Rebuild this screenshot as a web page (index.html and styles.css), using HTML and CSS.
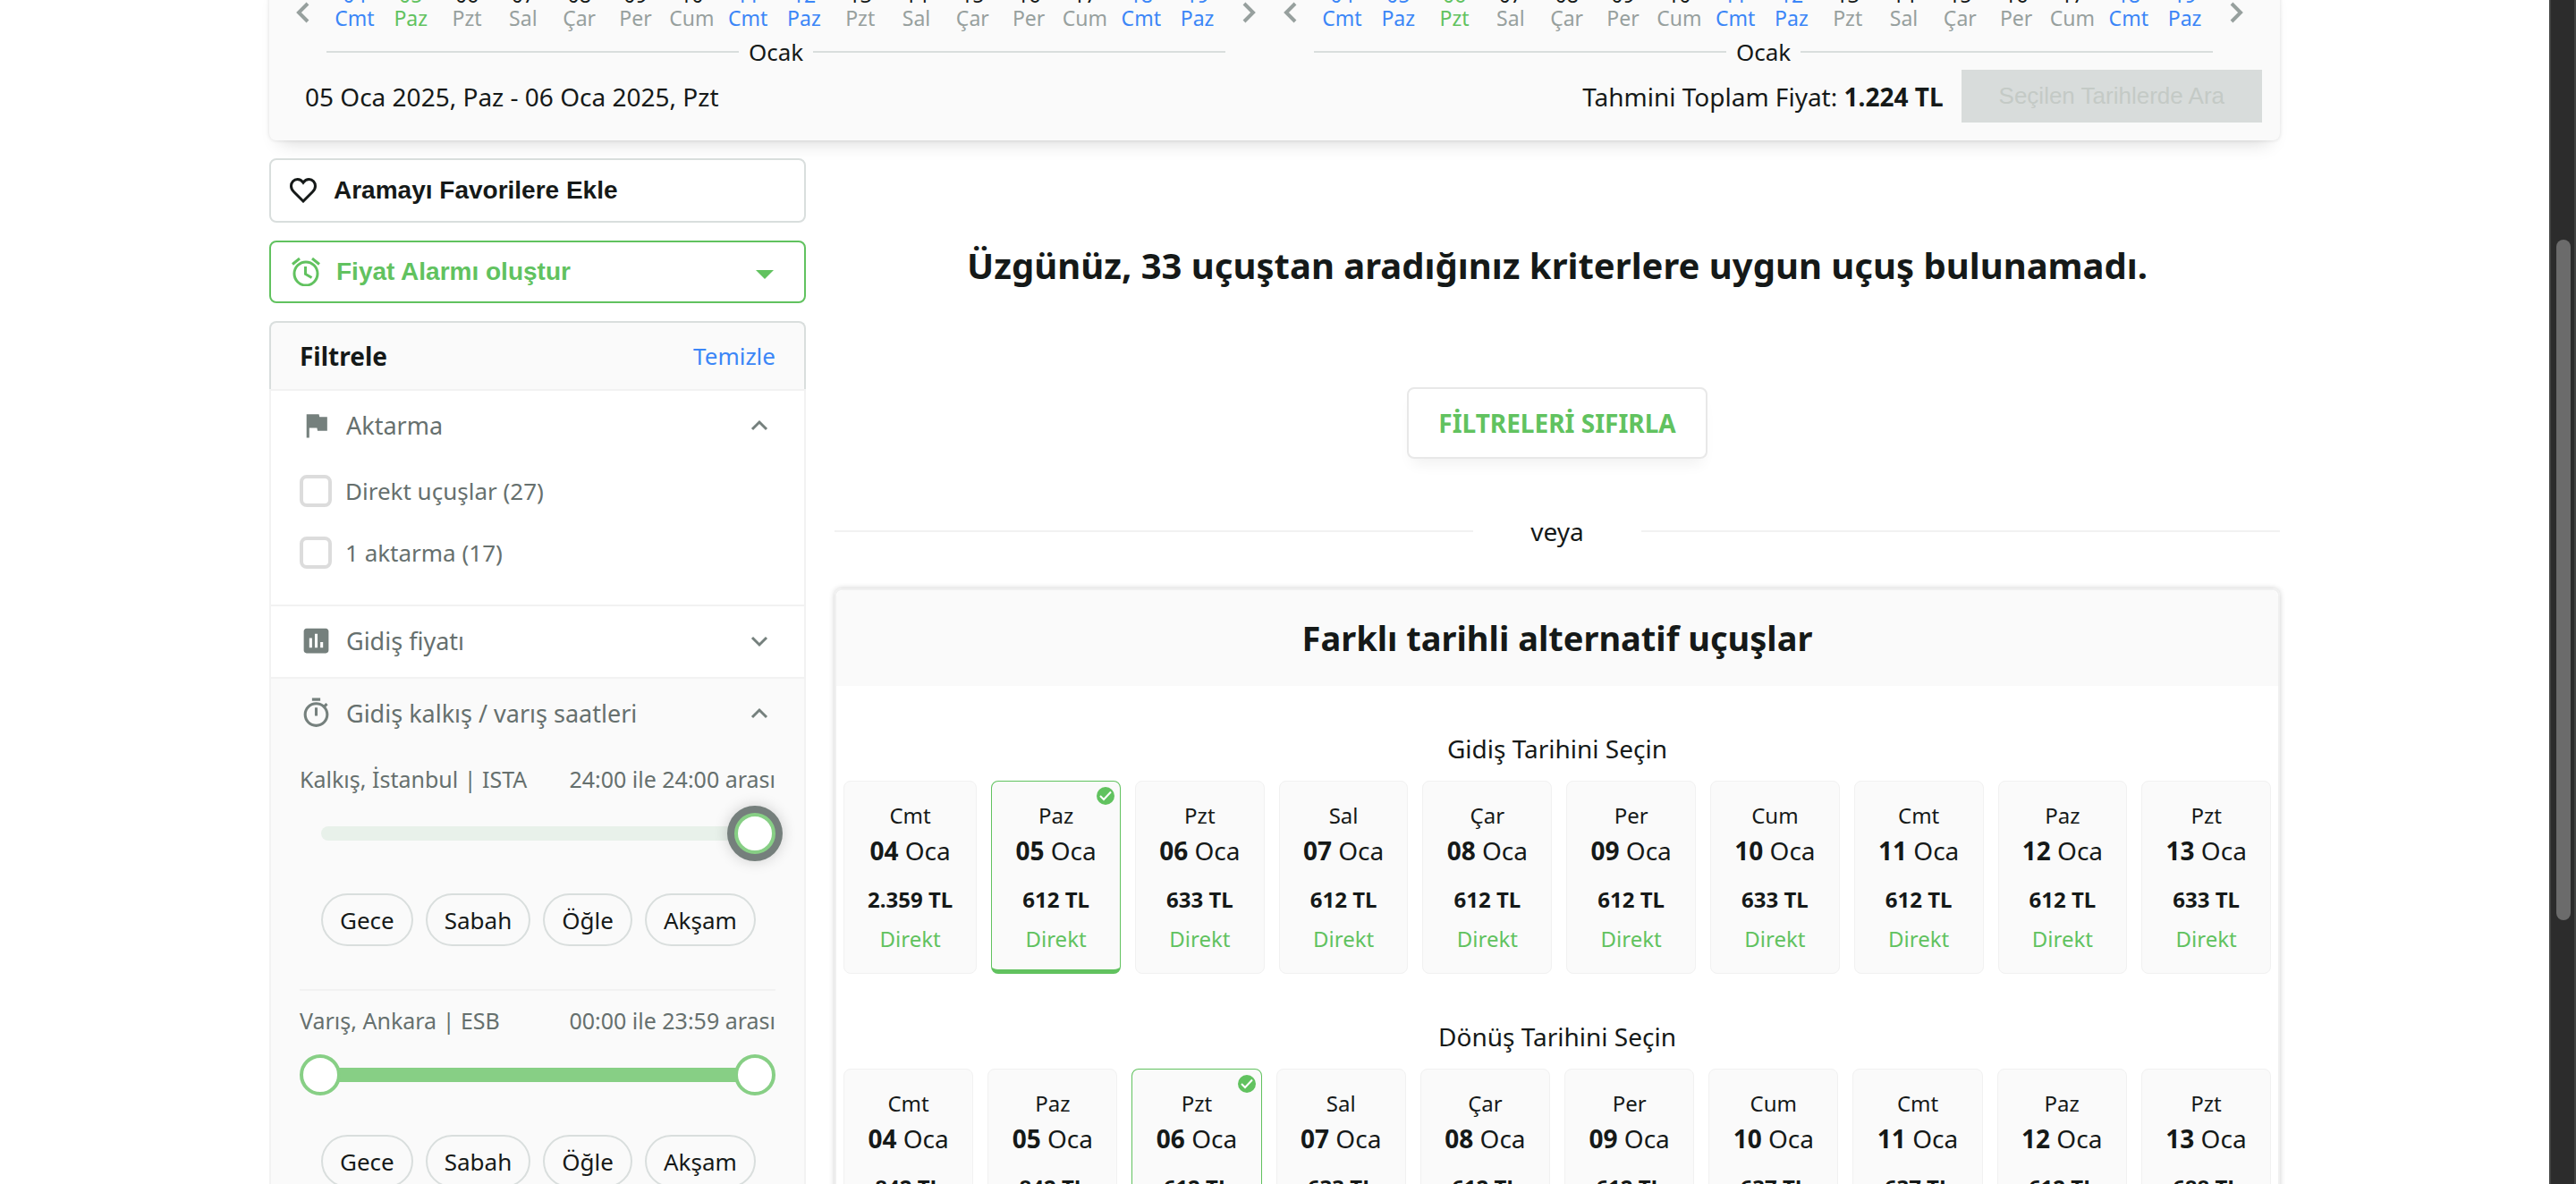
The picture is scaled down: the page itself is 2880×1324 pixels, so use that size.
FILE: index.html
```html
<!DOCTYPE html>
<html lang="tr">
<head>
<meta charset="utf-8">
<meta name="viewport" content="width=device-width, initial-scale=1">
<title>Uçak Bileti</title>
<link rel="stylesheet" href="styles.css">
</head>
<body>
<div class="viewport">
<div class="page">
  <section class="dates">
    <div class="pickers">
      <div class="picker" data-selected="5"></div>
      <div class="picker" data-selected="6"></div>
    </div>
    <div class="summary">
      <p class="range-text">05 Oca 2025, Paz - 06 Oca 2025, Pzt</p>
      <p class="total">Tahmini Toplam Fiyat: <strong>1.224 TL</strong></p>
      <button class="search" type="button" disabled>Seçilen Tarihlerde Ara</button>
    </div>
  </section>

  <div class="columns">
    <aside class="sidebar">
      <button class="action" type="button">
        <svg class="heart" viewBox="0 0 30 28"><path d="M15 26L4.500 15.500C2.500 13.500 1.500 11.500 1.500 9C1.500 4.800 4.500 1.500 8.500 1.500C11.200 1.500 13.500 3 15 5.200C16.500 3 18.800 1.500 21.500 1.500C25.500 1.500 28.500 4.800 28.500 9C28.500 11.500 27.500 13.500 25.500 15.500Z"/></svg>
        <span>Aramayı Favorilere Ekle</span>
      </button>
      <button class="action alarm" type="button">
        <svg class="clock" viewBox="0 0 32 32"><circle cx="16" cy="18" r="13"/><path d="M15.500 10v8.500l7 4M1 7.500l8-6.500M31 7.500l-8-6.500"/></svg>
        <span>Fiyat Alarmı oluştur</span>
        <i class="caret"></i>
      </button>

      <div class="filters">
        <header class="filters-head">
          <h2>Filtrele</h2>
          <a href="#temizle">Temizle</a>
        </header>
        <section class="filter">
          <button class="filter-title" type="button">
            <svg class="icon" viewBox="0 0 24 24"><path d="M14.400 6L14 4H5v17h2v-7h5.600l.4 2h7V6z"/></svg>
            <span>Aktarma</span>
            <svg class="chevron" viewBox="0 0 36 36"><path d="M10 22l8-8 8 8"/></svg>
          </button>
          <div class="options">
            <label><input type="checkbox">Direkt uçuşlar (27)</label>
            <label><input type="checkbox">1 aktarma (17)</label>
          </div>
        </section>
        <section class="filter">
          <button class="filter-title" type="button">
            <svg class="icon" viewBox="0 0 24 24"><path d="M19 3H5c-1.100 0-2 .9-2 2v14c0 1.100.9 2 2 2h14c1.100 0 2-.9 2-2V5c0-1.100-.9-2-2-2zM9 17H7v-7h2v7zm4 0h-2V7h2v10zm4 0h-2v-4h2v4z"/></svg>
            <span>Gidiş fiyatı</span>
            <svg class="chevron" viewBox="0 0 36 36"><path d="M10 14l8 8 8-8"/></svg>
          </button>
        </section>
        <section class="filter open">
          <button class="filter-title" type="button">
            <svg class="icon" viewBox="0 0 24 24"><path d="M15 1H9v2h6V1zm-4 13h2V8h-2v6zm8.030-6.610l1.420-1.420c-.43-.51-.9-.99-1.410-1.410l-1.420 1.420C16.070 4.740 14.120 4 12 4c-4.970 0-9 4.030-9 9s4.020 9 9 9 9-4.030 9-9c0-2.120-.74-4.070-1.970-5.610zM12 20c-3.870 0-7-3.130-7-7s3.130-7 7-7 7 3.130 7 7-3.130 7-7 7z"/></svg>
            <span>Gidiş kalkış / varış saatleri</span>
            <svg class="chevron" viewBox="0 0 36 36"><path d="M10 22l8-8 8 8"/></svg>
          </button>
          <div class="hours">
            <div class="hours-text"><span>Kalkış, İstanbul | ISTA</span><span>24:00 ile 24:00 arası</span></div>
            <div class="slider">
              <div class="track"></div>
              <input type="range" min="0" max="1440" value="1440" aria-label="Kalkış en erken">
              <input class="active" type="range" min="0" max="1440" value="1440" aria-label="Kalkış en geç">
            </div>
            <div class="pills"><button type="button">Gece</button><button type="button">Sabah</button><button type="button">Öğle</button><button type="button">Akşam</button></div>
          </div>
          <div class="hours">
            <div class="hours-text"><span>Varış, Ankara | ESB</span><span>00:00 ile 23:59 arası</span></div>
            <div class="slider">
              <div class="track full"></div>
              <input type="range" min="0" max="1439" value="0" aria-label="Varış en erken">
              <input type="range" min="0" max="1439" value="1439" aria-label="Varış en geç">
            </div>
            <div class="pills"><button type="button">Gece</button><button type="button">Sabah</button><button type="button">Öğle</button><button type="button">Akşam</button></div>
          </div>
        </section>
      </div>
    </aside>

    <main class="results">
      <h1>Üzgünüz, 33 uçuştan aradığınız kriterlere uygun uçuş bulunamadı.</h1>
      <button class="reset" type="button">FİLTRELERİ SIFIRLA</button>
      <div class="or"><span>veya</span></div>
      <section class="alternatives">
        <h2>Farklı tarihli alternatif uçuşlar</h2>
        <div class="alt-group">
          <h3>Gidiş Tarihini Seçin</h3>
          <div class="cards" data-selected="5" data-prices="2.359,612,633,612,612,612,633,612,612,633"></div>
        </div>
        <div class="alt-group">
          <h3>Dönüş Tarihini Seçin</h3>
          <div class="cards" data-selected="6" data-prices="842,842,612,633,612,612,637,637,612,688"></div>
        </div>
      </section>
    </main>
  </div>
</div>
<div class="scrollbar"><div class="thumb"></div></div>
</div>
<script src="script.js"></script>
</body>
</html>
```
FILE: script.js
```js
const names = ['Cmt', 'Paz', 'Pzt', 'Sal', 'Çar', 'Per', 'Cum'];
const pad = n => String(n).padStart(2, '0');

// Day strips: 4 to 19 January, weekends in blue, chosen day in green
document.querySelectorAll('.picker').forEach(el => {
  const selected = Number(el.dataset.selected);
  let days = '';
  for (let d = 4; d <= 19; d++) {
    const i = (d - 4) % 7;
    const cls = d === selected ? 'chosen' : i < 2 ? 'weekend' : '';
    days += `<button type="button" class="day ${cls}"><b>${pad(d)}</b><span>${names[i]}</span></button>`;
  }
  el.innerHTML = `
    <button type="button" class="arrow" aria-label="Önceki"><svg viewBox="0 0 15 24"><path d="M13 2L3 12l10 10"/></svg></button>
    <div class="strip"><div class="days">${days}</div><div class="month"><span>Ocak</span></div></div>
    <button type="button" class="arrow" aria-label="Sonraki"><svg viewBox="0 0 15 24"><path d="M2 2l10 10L2 22"/></svg></button>`;
});

// Alternative date cards: 4 to 13 January
document.querySelectorAll('.cards').forEach(el => {
  const selected = Number(el.dataset.selected);
  el.innerHTML = el.dataset.prices.split(',').map((price, i) => {
    const d = i + 4;
    const on = d === selected;
    const tick = on ? '<svg class="tick" viewBox="0 0 20 20"><circle cx="10" cy="10" r="10"/><path d="M4 10l4 4 8-8.500"/></svg>' : '';
    return `<button type="button" class="card${on ? ' selected' : ''}">${tick}<span class="name">${names[i % 7]}</span><span class="date"><b>${pad(d)}</b> Oca</span><b class="price">${price} TL</b><span class="direct">Direkt</span></button>`;
  }).join('');
});
```
FILE: styles.css
```css
* { box-sizing: border-box; }

body {
  margin: 0;
  background: #fff;
  color: #151918;
  font-family: "Noto Sans", "Open Sans", sans-serif;
  font-size: 28px;
}

h1, h2, h3, p { margin: 0; }

button {
  margin: 0;
  padding: 0;
  border: 0;
  background: none;
  color: inherit;
  font: inherit;
}

svg { display: block; flex: none; }

.viewport {
  display: flex;
  height: 100vh;
  overflow: hidden;
}

.page {
  flex: 1;
  min-width: 0;
  padding: 0 301px;
  overflow: hidden;
}

/* Date strip */
.dates {
  padding: 0 20px 20px 30px;
  background: #fafafa;
  border-radius: 0 0 8px 8px;
  box-shadow: 0 0 4px rgba(0, 0, 0, .12), 0 14px 20px -12px rgba(0, 0, 0, .16);
}

.pickers {
  display: flex;
  gap: 31px;
  margin-top: -26px;
  padding-right: 21px;
}

.picker {
  display: flex;
  flex: 1;
  gap: 19px;
}

.arrow {
  align-self: flex-start;
  margin-top: 28px;
}

.arrow svg {
  width: 15px;
  height: 24px;
  fill: none;
  stroke: #97a09e;
  stroke-width: 4;
}

.strip { flex: 1; }

.days {
  display: grid;
  grid-template-columns: repeat(16, 1fr);
}

.day {
  display: flex;
  flex-direction: column;
  align-items: center;
  font-size: 23px;
  line-height: 26px;
  padding-top: 7px;
}

.day b { font-weight: 400; }
.day span { color: #97a09e; }
.day.weekend, .day.weekend span { color: #3b86f7; }
.day.chosen, .day.chosen span { color: #61c25f; }

.month {
  display: flex;
  align-items: center;
  gap: 11px;
  margin-top: 7px;
  font-size: 26px;
  line-height: 36px;
}

.month::before, .month::after {
  content: "";
  flex: 1;
  height: 2px;
  background: #d9dedd;
}

.summary {
  display: flex;
  align-items: center;
  padding: 2px 0 0 10px;
}

.range-text { flex: 1; }

.search {
  height: 59px;
  margin-left: 20px;
  padding: 0 42px;
  background: #d8dcdb;
  color: #c4cac6;
  font-family: "Liberation Sans", Arial, sans-serif;
  font-size: 26px;
}

/* Columns */
.columns {
  display: flex;
  gap: 32px;
  padding-top: 20px;
}

.sidebar {
  display: flex;
  flex-direction: column;
  gap: 20px;
  width: 600px;
  flex: none;
}

.action {
  display: flex;
  align-items: center;
  gap: 19px;
  height: 72px;
  padding: 0 21px;
  border: 2px solid #d9dedd;
  border-radius: 8px;
  font-family: "Liberation Sans", Arial, sans-serif;
  font-weight: 700;
}

.action span { flex: 1; text-align: left; }
.alarm { height: 70px; gap: 18px; padding: 0 34px 0 23px; border-color: #61c25f; color: #61c25f; }

.heart { width: 30px; height: 28px; fill: none; stroke: #151918; stroke-width: 3; }
.clock { width: 32px; height: 32px; fill: none; stroke: #61c25f; stroke-width: 3; }

.caret {
  margin-top: 6px;
  border: 10px solid transparent;
  border-top-color: #61c25f;
  border-bottom: 0;
}

.filters-head {
  display: flex;
  align-items: center;
  justify-content: space-between;
  height: 76px;
  padding: 0 32px;
  border: 2px solid #d9dedd;
  border-bottom: 0;
  border-radius: 8px 8px 0 0;
  background: #fafafa;
}

.filters-head h2 { font-size: 28px; }
.filters-head a { color: #3b86f7; font-size: 26px; text-decoration: none; }

.filter {
  padding: 0 32px;
  border: solid #f2f2f2;
  border-width: 2px 2px 0;
  color: #66706e;
}

.filter.open { background: #fafafa; }

.filter-title {
  display: flex;
  align-items: center;
  gap: 15px;
  width: 100%;
  height: 79px;
  padding-bottom: 2px;
  font-size: 27px;
}

.filter-title span { flex: 1; text-align: left; }
.icon { width: 37px; height: 37px; fill: #75807d; }
.chevron { width: 36px; height: 36px; fill: none; stroke: #75807d; stroke-width: 3; }

.options {
  display: grid;
  gap: 33px;
  padding: 15px 0 40px;
  font-size: 26px;
  line-height: 36px;
}

.options label { display: flex; align-items: center; gap: 15px; }

.options input {
  appearance: none;
  width: 36px;
  height: 36px;
  margin: 0;
  border: 4px solid #dcdcdc;
  border-radius: 8px;
  background: #fff;
}

.hours { padding: 15px 0 48px; font-size: 26px; }
.hours + .hours { border-top: 2px solid #f2f2f2; }

.hours-text {
  display: flex;
  justify-content: space-between;
  font-size: 25px;
  line-height: 36px;
}

.slider {
  display: grid;
  align-items: center;
  margin: 20px 0 44px;
}

.slider > * { grid-area: 1 / 1; }

.track {
  height: 16px;
  margin: 0 24px;
  border-radius: 8px;
  background: #e8f1ea;
}

.track.full { background: #87cf85; }

.slider input {
  appearance: none;
  width: 100%;
  height: 46px;
  margin: 0;
  background: none;
  pointer-events: none;
}

.slider input::-webkit-slider-thumb {
  appearance: none;
  width: 46px;
  height: 46px;
  border: 4px solid #87cf85;
  border-radius: 50%;
  background: #fff;
  pointer-events: auto;
}

.slider .active::-webkit-slider-thumb {
  box-shadow: 0 0 0 8px #757f7c, 0 0 16px 8px rgba(0, 0, 0, .18);
}

.pills { display: flex; gap: 14px; padding-left: 24px; }

.pills button {
  height: 59px;
  padding: 0 19px;
  border: 2px solid #d9dedd;
  border-radius: 30px;
  color: #151918;
}

/* Results */
.results {
  display: flex;
  flex: 1;
  flex-direction: column;
  align-items: center;
  min-width: 0;
}

h1 { padding-top: 90px; font-size: 40px; line-height: 60px; }

.reset {
  height: 80px;
  margin-top: 106px;
  padding: 0 33px;
  border: 2px solid #e8e8e8;
  border-radius: 8px;
  box-shadow: 0 12px 16px -6px rgba(0, 0, 0, .06);
  color: #61c25f;
  font-weight: 700;
}

.or {
  display: flex;
  align-items: center;
  align-self: stretch;
  gap: 64px;
  margin-top: 61px;
  line-height: 40px;
}

.or::before, .or::after {
  content: "";
  flex: 1;
  height: 2px;
  background: #f2f2f2;
}

.alternatives {
  align-self: stretch;
  margin-top: 44px;
  border: 2px solid #f0f0f0;
  border-radius: 8px;
  box-shadow: 0 0 6px rgba(0, 0, 0, .2);
  text-align: center;
}

.alternatives h2 {
  border-radius: 8px 8px 0 0;
  background: #fafafa;
  font-size: 38px;
  line-height: 107px;
}

.alt-group { padding: 50px 8px 0; }

.alt-group h3 {
  font-size: 28px;
  font-weight: 400;
  line-height: 40px;
}

.cards { display: flex; gap: 16px; padding-top: 16px; }

.card {
  position: relative;
  display: flex;
  flex: 1;
  flex-direction: column;
  align-items: center;
  height: 216px;
  padding: 19px 26px 0;
  border: 1px solid #f1f1f1;
  border-radius: 8px;
  background: #fafafa;
  font-size: 24px;
  white-space: nowrap;
}

.card.selected { border-color: #61c25f; border-bottom-width: 5px; }
.name { line-height: 38px; }
.date { font-size: 28px; line-height: 40px; }
.price { padding-top: 13px; line-height: 44px; }
.direct { color: #61c25f; line-height: 44px; }

.tick {
  position: absolute;
  top: 6px;
  right: 6px;
  width: 20px;
  height: 20px;
  fill: #61c25f;
}

.tick path { fill: none; stroke: #fff; stroke-width: 2; }

/* Window scrollbar */
.scrollbar {
  flex: none;
  width: 30px;
  padding: 268px 4px 0 6px;
  border: solid #424342;
  border-width: 0 2px;
  background: #2c2c2c;
}

.thumb {
  width: 16px;
  height: 761px;
  border-radius: 8px;
  background: #6b6b6b;
}
```
